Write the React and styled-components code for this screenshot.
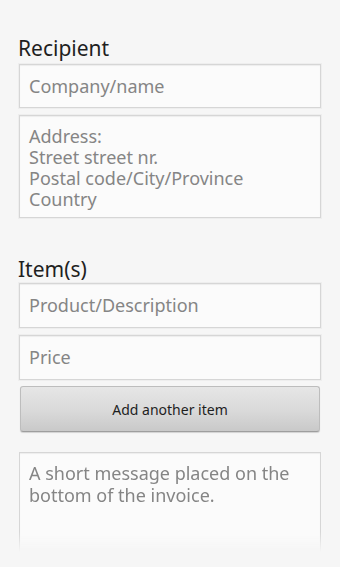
import React from "react";
import styled, { createGlobalStyle } from "styled-components";

const Global = createGlobalStyle`
  html, body {
    margin: 0;
    padding: 0;
    background: #f6f6f6;
  }
  body {
    font-family: "Noto Sans", "Open Sans", sans-serif;
  }
`;

const Page = styled.div`
  width: 340px;
  height: 567px;
  overflow: hidden;
  box-sizing: border-box;
  padding: 36px 19px 0 19px;
  display: flex;
  flex-direction: column;
`;

const Heading = styled.h2`
  margin: ${(p) => p.$top || 0}px 0 ${(p) => p.$bottom || 0}px -1px;
  font-size: 21px;
  line-height: 24px;
  font-weight: normal;
  color: #1f1f1f;
`;

const Field = styled.div`
  box-sizing: border-box;
  height: ${(p) => p.$h || 44}px;
  margin-bottom: ${(p) => p.$gap || 0}px;
  padding: ${(p) => (p.$multi ? "10px 9px 0" : "0 9px")};
  display: flex;
  flex-direction: column;
  justify-content: ${(p) => (p.$multi ? "flex-start" : "center")};
  background: #fbfbfb;
  border: 1px solid #d6d6d6;
  box-shadow: inset 0 1px 1px rgba(0, 0, 0, 0.06), 0 0 0 1px #eeeeee;
  color: #858585;
  font-size: 18px;
  line-height: 21px;
`;

const Message = styled(Field)`
  border-bottom: none;
  line-height: 22px;
  padding-top: 9px;
  -webkit-mask-image: linear-gradient(to bottom, #000 80%, transparent 100%);
  mask-image: linear-gradient(to bottom, #000 80%, transparent 100%);
`;

const Line = styled.span`
  display: block;
  white-space: nowrap;
`;

const Button = styled.button`
  box-sizing: border-box;
  height: 46px;
  margin: 0 1px 20px;
  border: 1px solid #bdbdbd;
  border-bottom-color: #9e9e9e;
  border-radius: 3px;
  background: linear-gradient(to bottom, #e6e6e6 0%, #d9d9d9 55%, #c9c9c9 100%);
  box-shadow: 0 1px 1px rgba(0, 0, 0, 0.15);
  font-family: "Noto Sans", "Open Sans", sans-serif;
  font-size: 14px;
  color: #1e1e1e;
  padding: 0;
`;

export default function App() {
  return (
    <>
      <Global />
      <Page>
        <Heading $bottom={4}>Recipient</Heading>
        <Field $gap={7}>Company/name</Field>
        <Field $multi $h={103}>
          <Line>Address:</Line>
          <Line>Street street nr.</Line>
          <Line>Postal code/City/Province</Line>
          <Line>Country</Line>
        </Field>

        <Heading $top={39} $bottom={2}>Item(s)</Heading>
        <Field $h={45} $gap={7}>Product/Description</Field>
        <Field $h={45} $gap={6}>Price</Field>
        <Button>Add another item</Button>

        <Message $multi $h={100}>
          <Line>A short message placed on the</Line>
          <Line>bottom of the invoice.</Line>
        </Message>
      </Page>
    </>
  );
}
